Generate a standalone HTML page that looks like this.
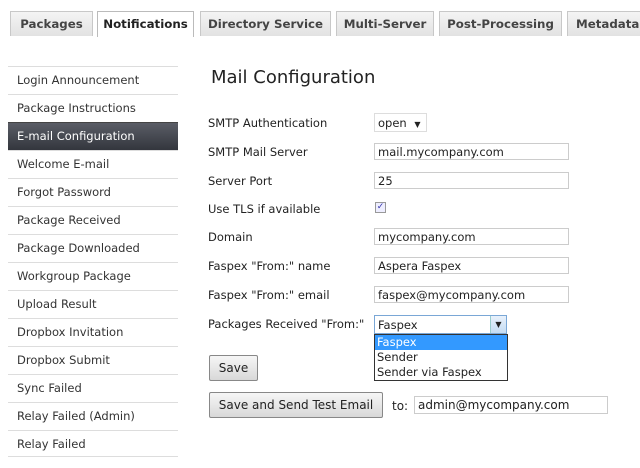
<!DOCTYPE html>
<html><head><style>
*{margin:0;padding:0;box-sizing:border-box}
body{width:640px;height:468px;background:#fff;font-family:"DejaVu Sans","Liberation Sans",sans-serif;font-size:11.5px;color:#222;position:relative;overflow:hidden}
.a{position:absolute;white-space:nowrap}
.tab{position:absolute;top:11px;height:25px;border:1px solid #c8c8c8;border-bottom:none;background:linear-gradient(#f4f4f4,#e2e2e2);font-weight:bold;font-size:11.8px;color:#444;padding-top:5px;text-align:center}
.tab.on{background:#fff;color:#222;height:26px;border-color:#bbb}
.side{position:absolute;left:8px;width:170px;height:28px;border-top:1px solid #ddd;padding:6px 0 0 9px;font-size:11.5px;color:#333}
.side.on{background:linear-gradient(#5a5d66,#33363d);color:#fff;border-top-color:#444}
.lbl{position:absolute;left:208px;font-size:11.5px;color:#222}
.in{position:absolute;left:374px;width:195px;height:17px;border:1px solid #ccc;font-size:11.5px;padding:1px 3px;line-height:14px}
.btn{position:absolute;border:1px solid #888;border-radius:2px;background:linear-gradient(#f6f6f6,#d8d8d8);font-size:12px;text-align:center;color:#222}
</style></head><body>
<div class="tab" style="left:10px;width:83px">Packages</div>
<div class="tab on" style="left:97px;width:97px">Notifications</div>
<div class="tab" style="left:200px;width:131px">Directory Service</div>
<div class="tab" style="left:336px;width:98px">Multi-Server</div>
<div class="tab" style="left:439px;width:123px">Post-Processing</div>
<div class="tab" style="left:567px;width:90px;text-align:left;padding-left:8px">Metadata</div>

<div class="side" style="top:66px">Login Announcement</div>
<div class="side" style="top:94px">Package Instructions</div>
<div class="side on" style="top:122px">E-mail Configuration</div>
<div class="side" style="top:150px">Welcome E-mail</div>
<div class="side" style="top:178px">Forgot Password</div>
<div class="side" style="top:206px">Package Received</div>
<div class="side" style="top:234px">Package Downloaded</div>
<div class="side" style="top:262px">Workgroup Package</div>
<div class="side" style="top:290px">Upload Result</div>
<div class="side" style="top:318px">Dropbox Invitation</div>
<div class="side" style="top:346px">Dropbox Submit</div>
<div class="side" style="top:374px">Sync Failed</div>
<div class="side" style="top:402px">Relay Failed (Admin)</div>
<div class="side" style="top:430px">Relay Failed</div>
<div class="a" style="left:8px;top:456px;width:170px;border-top:1px solid #ddd"></div>

<div class="a" style="left:211px;top:67px;font-size:18px;color:#222">Mail Configuration</div>

<div class="lbl" style="top:116px">SMTP Authentication</div>
<div class="a" style="left:374px;top:113px;width:53px;height:19px;border:1px solid #ddd;font-size:11.5px;padding:2px 0 0 3px">open <span style="font-size:8px;margin-left:4px">▼</span></div>
<div class="lbl" style="top:145px">SMTP Mail Server</div>
<div class="in" style="top:143px">mail.mycompany.com</div>
<div class="lbl" style="top:174px">Server Port</div>
<div class="in" style="top:172px">25</div>
<div class="lbl" style="top:202px">Use TLS if available</div>
<div class="a" style="left:375px;top:202px;width:11px;height:11px;border:1px solid #999;background:#eef;font-size:9px;line-height:9px;color:#33a;text-align:center">✓</div>
<div class="lbl" style="top:230px">Domain</div>
<div class="in" style="top:228px">mycompany.com</div>
<div class="lbl" style="top:259px">Faspex "From:" name</div>
<div class="in" style="top:257px">Aspera Faspex</div>
<div class="lbl" style="top:288px">Faspex "From:" email</div>
<div class="in" style="top:286px">faspex@mycompany.com</div>
<div class="lbl" style="top:317px">Packages Received "From:"</div>
<div class="a" style="left:374px;top:315px;width:133px;height:19px;border:1px solid #7aa7d6;font-size:11.5px;padding:2px 0 0 3px">Faspex</div>
<div class="a" style="left:490px;top:316px;width:16px;height:17px;background:linear-gradient(#e8f1fb,#c5dcf3);border-left:1px solid #9cc;font-size:8px;text-align:center;line-height:17px">▼</div>
<div class="a" style="left:374px;top:334px;width:134px;height:47px;border:1px solid #333;background:#fff;font-size:11.5px">
<div style="background:#3399ff;color:#fff;height:15px;padding-left:2px;line-height:15px">Faspex</div>
<div style="height:15px;padding-left:2px;line-height:15px">Sender</div>
<div style="height:15px;padding-left:2px;line-height:15px">Sender via Faspex</div>
</div>

<div class="btn" style="left:209px;top:355px;width:49px;height:26px;line-height:24px">Save</div>
<div class="btn" style="left:209px;top:392px;width:174px;height:26px;line-height:24px">Save and Send Test Email</div>
<div class="a" style="left:392px;top:399px;font-size:12px">to:</div>
<div class="in" style="left:414px;top:396px;width:194px;height:18px;font-size:12px">admin@mycompany.com</div>
</body></html>
